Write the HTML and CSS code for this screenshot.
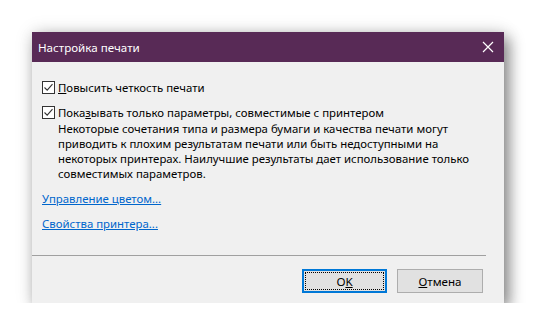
FILE: index.html
```html
<!DOCTYPE html>
<html>
<head>
  <meta charset="UTF-8">
  <title>Настройка печати</title>
  <link rel="stylesheet" href="styles.css">
</head>
<body>
  <div class="dialog">
    <div class="titlebar">
      <span class="title">Настройка печати</span>
      <svg class="close" width="12" height="12" viewBox="0 0 12 12">
        <path d="M1 1 L11 11 M11 1 L1 11" stroke="#ffffff" stroke-width="1.2" fill="none"/>
      </svg>
    </div>

    <div class="content">
      <label class="check">
        <span class="box">
          <svg width="11" height="11" viewBox="0 0 11 11"><path d="M1.5 5.5 L4.2 8.2 L9.5 2.2" stroke="#333" stroke-width="1.1" fill="none"/></svg>
        </span>
        <span><u>П</u>овысить четкость печати</span>
      </label>

      <label class="check second">
        <span class="box">
          <svg width="11" height="11" viewBox="0 0 11 11"><path d="M1.5 5.5 L4.2 8.2 L9.5 2.2" stroke="#333" stroke-width="1.1" fill="none"/></svg>
        </span>
        <span>Пока<u>з</u>ывать только параметры, совместимые с принтером</span>
      </label>
      <p class="note">Некоторые сочетания типа и размера бумаги и качества печати могут<br>приводить к плохим результатам печати или быть недоступными на<br>некоторых принтерах. Наилучшие результаты дает использование только<br>совместимых параметров.</p>

      <a class="link first" href="#">Управление цветом...</a>
      <a class="link" href="#">Свойства принтера...</a>
    </div>

    <div class="separator"></div>

    <div class="buttons">
      <button class="btn ok"><span class="focus">O<u>K</u></span></button>
      <button class="btn"><u>О</u>тмена</button>
    </div>
  </div>
</body>
</html>
```

FILE: styles.css
```css
body {
  margin: 0;
  background-color: #ffffff;
  font-family: "Noto Sans", "Open Sans", sans-serif;
  font-size: 11.4px;
  color: #000000;
}

.dialog {
  margin: 32px 0 0 32px;
  width: 472px;
  height: 271px;
  background-color: #f0f0f0;
  box-shadow: 5px 6px 14px rgba(0, 0, 0, 0.45), 0 0 18px rgba(0, 0, 0, 0.12);
  display: flex;
  flex-direction: column;
}

.titlebar {
  height: 30px;
  background-color: #582a56;
  color: #ffffff;
  display: flex;
  align-items: center;
  justify-content: space-between;
  padding: 0 10px 0 6px;
}

.title {
  font-size: 11.6px;
}

.close {
  display: block;
}

.content {
  padding: 18px 10px 0 10px;
  display: flex;
  flex-direction: column;
  align-items: flex-start;
  height: 175px;
}

.check {
  display: flex;
  align-items: center;
  line-height: 15px;
}

.check.second {
  margin-top: 10px;
}

.box {
  width: 11px;
  height: 11px;
  border: 1px solid #333333;
  background-color: #ffffff;
  margin-right: 3px;
  display: flex;
}

.note {
  margin: 1px 0 0 16px;
  line-height: 15px;
  white-space: nowrap;
}

.link {
  color: #0066cc;
  line-height: 15px;
  margin-top: 10px;
}

.link.first {
  margin-top: 10px;
}

.separator {
  width: 454px;
  height: 1px;
  background-color: #a0a0a0;
}

.buttons {
  display: flex;
  justify-content: flex-end;
  gap: 10px;
  padding: 13px 21px 0 0;
}

.btn {
  width: 86px;
  height: 24px;
  background-color: #e1e1e1;
  border: 1px solid #adadad;
  font-family: "Noto Sans", "Open Sans", sans-serif;
  font-size: 11.6px;
  color: #000000;
  padding: 0;
}

.btn.ok {
  width: 85px;
  border: 2px solid #0078d7;
  padding: 1px;
}

.focus {
  display: flex;
  align-items: center;
  justify-content: center;
  height: 100%;
  border: 1px dotted #000000;
  box-sizing: border-box;
}
```
